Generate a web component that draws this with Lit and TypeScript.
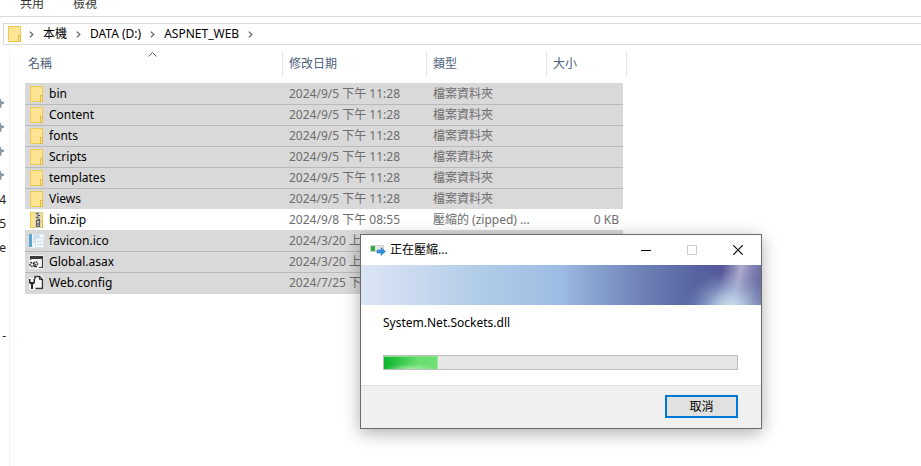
import { LitElement, html, css, svg, nothing } from "lit";
import { customElement } from "lit/decorators.js";

type Kind = "folder" | "zip" | "ico" | "asax" | "config";
interface Entry {
  name: string;
  date: string;
  type?: string;
  size?: string;
  kind: Kind;
  selected: boolean;
}

const folder = (name: string): Entry => ({
  name, date: "2024/9/5 下午 11:28", type: "檔案資料夾", kind: "folder", selected: true,
});

const entries: Entry[] = [
  folder("bin"),
  folder("Content"),
  folder("fonts"),
  folder("Scripts"),
  folder("templates"),
  folder("Views"),
  { name: "bin.zip", date: "2024/9/8 下午 08:55", type: "壓縮的 (zipped) ...", size: "0 KB", kind: "zip", selected: false },
  { name: "favicon.ico", date: "2024/3/20 上午", kind: "ico", selected: true },
  { name: "Global.asax", date: "2024/3/20 上午", kind: "asax", selected: true },
  { name: "Web.config", date: "2024/7/25 下午", kind: "config", selected: true },
];

const folderShape = svg`
  <rect x="1.500" y="0.500" width="12" height="15" fill="#ffe494" stroke="#ecca55"/>
  <rect x="11.500" y="9.500" width="2" height="6" fill="#ffe494" stroke="#e3bc42"/>`;

const shapes: Record<Kind, unknown> = {
  folder: folderShape,
  zip: svg`
    ${folderShape}
    <rect x="6" y="0" width="6" height="16" fill="#d6d2c0"/>
    <path d="M7 1.500h2M9 3.500h2M7 5.500h2M9 7.500h2" stroke="#444"/>
    <path d="M9 0v9" stroke="#777"/>
    <rect x="7.500" y="8.500" width="3" height="6" fill="#bbb" stroke="#666"/>
    <rect x="8.500" y="11" width="1" height="2" fill="#444"/>`,
  ico: svg`
    <rect x="0" y="1" width="15" height="14" fill="#eef4f8"/>
    <rect x="0" y="1" width="3" height="13" fill="#5ba7d1"/>
    <rect x="4" y="1" width="7" height="9" fill="#d5e4f1"/>
    <path d="M5 3.500h5M5 5.500h5" stroke="#c2d6e8"/>
    <rect x="6.500" y="5.500" width="8" height="9" fill="#f6f9fb" stroke="#d5e0e9"/>
    <path d="M8 8.500h5M8 11.500h5" stroke="#cbd8e4"/>`,
  asax: svg`
    <path d="M0 1h15v14H0z" fill="#f4f4f4"/>
    <path d="M1.500 6V2.500H13.500V13.500H10" fill="none" stroke="#3b3b3b" stroke-width="1.200"/>
    <path d="M1 2h13v3H1z" fill="#3b3b3b"/>
    <circle cx="3" cy="10.500" r="2" fill="none" stroke="#333" stroke-width="1.600" stroke-dasharray="1.600 .7"/>
    <circle cx="7" cy="9.500" r="1.600" fill="none" stroke="#333" stroke-width="1.400" stroke-dasharray="1.500 .7"/>
    <path d="M5 12.500h3" stroke="#333" stroke-width="1.500"/>`,
  config: svg`
    <path d="M0 3h5V0h7l3 3v12H0z" fill="#f4f4f4"/>
    <path d="M6 4V1.500H10.500L13.500 4.500V13.500H6.500" fill="#f6f6f6" stroke="#333" stroke-width="1.400"/>
    <path d="M10.500 1.500V4.500H13.500" fill="none" stroke="#333"/>
    <path d="M0 4v4l2 1.500V14h2V9.500L6 8V4H4.500v3h-3V4z" fill="#2b2b2b"/>`,
};

const icon = (kind: Kind) =>
  html`<svg class="icon" width="16" height="16" viewBox="0 0 16 16" aria-hidden="true">${shapes[kind]}</svg>`;

@customElement("file-table")
export class FileTable extends LitElement {
  static styles = css`
    :host { display: block; min-width: 0; }
    table { border-collapse: separate; border-spacing: 0; table-layout: fixed; width: 602px; }
    .c-name { width: 258px; }
    .c-date { width: 144px; }
    .c-type { width: 120px; }
    .c-size { width: 76px; }
    .c-edge { width: 4px; }
    th { padding: 0 0 6px; font-weight: 400; text-align: left; color: #4c607a; }
    .head {
      position: relative; box-sizing: border-box; height: 25px; line-height: 24px;
      padding-left: 6px; border-right: 1px solid #e5e5e5;
    }
    .first { padding-left: 3px; }
    .sort { position: absolute; left: 123px; top: 0; }
    td {
      box-sizing: border-box; height: 21px; padding: 1px 6px 0; line-height: 18px;
      color: #6d6d6d; white-space: nowrap; overflow: hidden;
    }
    .selected td { background: #d9d9d9; }
    .selected + .selected td { border-top: 1px solid #b9b9b9; padding-top: 0; }
    tr:last-child td { height: 22px; padding-bottom: 1px; }
    .name { display: flex; align-items: center; gap: 4px; height: 20px; color: #000; }
    td.cell { padding-left: 4px; }
    td.size { text-align: right; padding-right: 4px; }
    .icon { flex: none; }
  `;

  render() {
    return html`<table>
      <colgroup>
        <col class="c-name"><col class="c-date"><col class="c-type"><col class="c-size"><col class="c-edge">
      </colgroup>
      <thead><tr>
        <th aria-sort="ascending"><div class="head first">名稱
          <svg class="sort" width="9" height="5" viewBox="0 0 9 5" aria-hidden="true"><path d="M.5 4.500l4-4 4 4" fill="none" stroke="#5f5f5f"/></svg>
        </div></th>
        <th><div class="head">修改日期</div></th>
        <th><div class="head">類型</div></th>
        <th colspan="2"><div class="head">大小</div></th>
      </tr></thead>
      <tbody>${entries.map((e) => html`
        <tr class=${e.selected ? "selected" : "plain"}>
          <td class="cell"><div class="name">${icon(e.kind)}<span>${e.name}</span></div></td>
          <td>${e.date}</td>
          <td>${e.type ?? nothing}</td>
          <td class="size">${e.size ?? nothing}</td>
        </tr>`)}
      </tbody>
    </table>`;
  }
}

@customElement("progress-dialog")
export class ProgressDialog extends LitElement {
  static styles = css`
    :host {
      display: block; box-sizing: border-box; width: 402px; background: #fff;
      border: 1px solid #6b6b6b; box-shadow: 0 4px 16px rgba(0, 0, 0, 0.32); color: #000;
    }
    .title { display: flex; align-items: center; height: 30px; padding-left: 9px; }
    .title h1 { flex: 1; margin: 0 0 0 4px; font-size: 12px; font-weight: 400; line-height: 20px; }
    .window {
      display: grid; place-items: center; width: 46px; height: 28px; padding: 0;
      border: 0; background: none; color: #000;
    }
    .window:disabled { color: #ccc; }
    .banner { display: block; width: 100%; height: 40px; }
    .body { padding: 8px 23px 15px 22px; }
    .file { margin: 0 0 22px; line-height: 20px; }
    progress {
      display: block; box-sizing: border-box; width: 100%; height: 15px; appearance: none;
      border: 1px solid #bcbcbc; background: #e6e6e6;
    }
    progress::-webkit-progress-bar { background: #e6e6e6; }
    progress::-webkit-progress-value {
      background:
        radial-gradient(ellipse 26px 5px at 50% 100%, rgba(190, 245, 190, 0.7), transparent),
        linear-gradient(90deg, #0cb62c, #6ade70 65%, #6fdf73);
      box-shadow: inset 0 1px #86e38c, inset -1px 0 #98ee98;
    }
    .foot {
      display: flex; justify-content: flex-end; padding: 9px 23px 10px;
      border-top: 1px solid #dfdfdf; background: #f0f0f0;
    }
    .cancel {
      box-sizing: border-box; width: 73px; height: 23px; padding: 0; border: 2px solid #0078d7;
      background: #e1e1e1; color: #000; font: inherit; line-height: 18px;
    }
  `;

  render() {
    return html`
      <div class="title">
        <svg width="16" height="16" viewBox="0 0 16 16" aria-hidden="true">
          <rect x=".5" y="3.500" width="13" height="6" fill="#e6e6e6" stroke="#cfcfcf"/>
          <rect x="1" y="4" width="4" height="5" fill="#2fae3b"/>
          <path d="M7 8h4V5.500l4.500 4L11 13.500V11H7z" fill="#2f8fdd" stroke="#2478c0" stroke-width=".5"/>
        </svg>
        <h1>正在壓縮...</h1>
        <button class="window" aria-label="最小化">
          <svg width="10" height="11" viewBox="0 0 10 11"><path d="M0 5.500h10" stroke="currentColor"/></svg>
        </button>
        <button class="window" aria-label="最大化" disabled>
          <svg width="10" height="10" viewBox="0 0 10 10"><rect x=".5" y=".5" width="9" height="9" fill="none" stroke="currentColor"/></svg>
        </button>
        <button class="window" aria-label="關閉">
          <svg width="10" height="10" viewBox="0 0 10 10"><path d="M.2 .2l9.600 9.600M9.800 .2l-9.600 9.600" stroke="currentColor" stroke-width="1.100"/></svg>
        </button>
      </div>
      <svg class="banner" viewBox="0 0 400 40" preserveAspectRatio="none" aria-hidden="true">
        <defs>
          <linearGradient id="sky">
            <stop offset="0" stop-color="#dce5f4"/>
            <stop offset=".16" stop-color="#c6d7ee"/>
            <stop offset=".3" stop-color="#b0cce8"/>
            <stop offset=".4" stop-color="#a6c5e5"/>
            <stop offset=".5" stop-color="#9dbce4"/>
            <stop offset=".57" stop-color="#8ba5d1"/>
            <stop offset=".72" stop-color="#6b7db3"/>
            <stop offset=".84" stop-color="#5763a0"/>
            <stop offset=".9" stop-color="#56599a"/>
            <stop offset="1" stop-color="#6468a0"/>
          </linearGradient>
          <radialGradient id="glow" cx="369" cy="44" r="46" gradientUnits="userSpaceOnUse" gradientTransform="translate(0 8) scale(1 .8)">
            <stop offset="0" stop-color="#cfe3f0"/>
            <stop offset=".35" stop-color="#b4cbe2" stop-opacity=".8"/>
            <stop offset="1" stop-color="#7f93c2" stop-opacity="0"/>
          </radialGradient>
          <linearGradient id="ray" gradientUnits="userSpaceOnUse" x1="358" y1="18" x2="396" y2="28">
            <stop offset="0" stop-color="#a9a8cf" stop-opacity="0"/>
            <stop offset=".45" stop-color="#b3b0d0" stop-opacity=".95"/>
            <stop offset="1" stop-color="#8f90bd" stop-opacity=".15"/>
          </linearGradient>
        </defs>
        <rect width="400" height="40" fill="url(#sky)"/>
        <rect x="340" width="60" height="40" fill="url(#ray)"/>
        <rect x="310" width="90" height="40" fill="url(#glow)"/>
      </svg>
      <div class="body">
        <p class="file">System.Net.Sockets.dll</p>
        <progress max="353" value="54" aria-label="System.Net.Sockets.dll"></progress>
      </div>
      <div class="foot"><button class="cancel">取消</button></div>
    `;
  }
}

@customElement("app-root")
export class AppRoot extends LitElement {
  static styles = css`
    :host {
      display: flex; flex-direction: column; position: relative; min-height: 100vh;
      overflow: hidden; background: #fff; color: #000;
      font: 12px/18px "Noto Sans", "Noto Sans CJK TC", sans-serif;
    }
    .tabs {
      display: flex; align-items: flex-end; gap: 29px; height: 16px; padding-left: 20px;
      border-bottom: 1px solid #dadada; overflow: hidden;
    }
    .tabs a { height: 21px; line-height: 18px; color: #333; text-decoration: none; }
    .path {
      display: flex; align-items: center; height: 20px; margin: 6px 0 7px 3px; padding-left: 3px;
      border: 1px solid #d9d9d9; border-right: 0;
    }
    .path a { color: #000; text-decoration: none; line-height: 20px; }
    .chevron { flex: none; margin: 0 9px; }
    .icon + .chevron { margin-left: 6px; }
    .main { display: flex; flex: 1; }
    .side {
      display: flex; flex-direction: column; width: 9px; padding-top: 40px;
      border-right: 1px solid #f0f0f0; overflow: hidden;
    }
    .item { display: flex; align-items: center; justify-content: flex-end; height: 24px; padding-right: 3px; color: #222; }
    .pin { flex: none; margin-right: 2px; }
    .late { margin-top: 64px; }
    file-table { margin-left: 15px; }
    progress-dialog { position: absolute; left: 360px; top: 234px; }
  `;

  private chevron() {
    return html`<svg class="chevron" width="5" height="7" viewBox="0 0 5 7" aria-hidden="true"><path d="M.8 .6l3 2.900-3 2.900" fill="none" stroke="#666" stroke-width="1.300"/></svg>`;
  }

  render() {
    return html`
      <nav class="tabs"><a href="#share">共用</a><a href="#view">檢視</a></nav>
      <nav class="path">
        ${icon("folder")}${this.chevron()}
        <a href="#pc">本機</a>${this.chevron()}
        <a href="#d">DATA (D:)</a>${this.chevron()}
        <a href="#web">ASPNET_WEB</a>${this.chevron()}
      </nav>
      <div class="main">
        <div class="side">
          ${[0, 1, 2, 3].map(() => html`<div class="item">
            <svg class="pin" width="8" height="10" viewBox="0 0 8 10" aria-hidden="true"><path d="M3 0h2v2l3 1v2H6L5 9H4V6H0V2h3z" fill="#8d979f"/></svg>
          </div>`)}
          <div class="item">4</div>
          <div class="item">5</div>
          <div class="item">e</div>
          <div class="item late">-</div>
        </div>
        <file-table></file-table>
      </div>
      <progress-dialog></progress-dialog>
    `;
  }
}
